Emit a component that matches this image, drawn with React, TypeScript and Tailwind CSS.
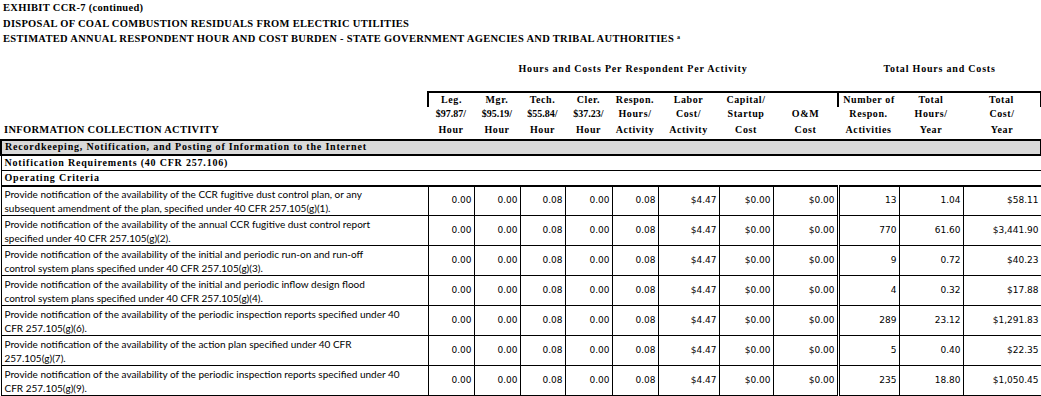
import React from "react";

const rows = [
  {
    d1: "Provide notification of the availability of the CCR fugitive dust control plan, or any",
    d2: "subsequent amendment of the plan, specified under 40 CFR 257.105(g)(1).",
    n: "13",
    h: "1.04",
    c: "$58.11",
  },
  {
    d1: "Provide notification of the availability of the annual CCR fugitive dust control report",
    d2: "specified under 40 CFR 257.105(g)(2).",
    n: "770",
    h: "61.60",
    c: "$3,441.90",
  },
  {
    d1: "Provide notification of the availability of the initial and periodic run-on and run-off",
    d2: "control system plans specified under 40 CFR 257.105(g)(3).",
    n: "9",
    h: "0.72",
    c: "$40.23",
  },
  {
    d1: "Provide notification of the availability of the initial and periodic inflow design flood",
    d2: "control system plans specified under 40 CFR 257.105(g)(4).",
    n: "4",
    h: "0.32",
    c: "$17.88",
  },
  {
    d1: "Provide notification of the availability of the periodic inspection reports specified under 40",
    d2: "CFR 257.105(g)(6).",
    n: "289",
    h: "23.12",
    c: "$1,291.83",
  },
  {
    d1: "Provide notification of the availability of the action plan specified under 40 CFR",
    d2: "257.105(g)(7).",
    n: "5",
    h: "0.40",
    c: "$22.35",
  },
  {
    d1: "Provide notification of the availability of the periodic inspection reports specified under 40",
    d2: "CFR 257.105(g)(9).",
    n: "235",
    h: "18.80",
    c: "$1,050.45",
  },
];

const fixed = ["0.00", "0.00", "0.08", "0.00", "0.08", "$4.47", "$0.00", "$0.00"];

const widths = [427, 46, 46, 45, 47, 46, 61, 54, 65, 61, 64, 78];

const head: string[][] = [
  ["Leg.", "$97.87/", "Hour"],
  ["Mgr.", "$95.19/", "Hour"],
  ["Tech.", "$55.84/", "Hour"],
  ["Cler.", "$37.23/", "Hour"],
  ["Respon.", "Hours/", "Activity"],
  ["Labor", "Cost/", "Activity"],
  ["Capital/", "Startup", "Cost"],
  ["", "O&M", "Cost"],
  ["Number of", "Respon.", "Activities"],
  ["Total", "Hours/", "Year"],
  ["Total", "Cost/", "Year"],
];

const serif = "font-['Liberation_Serif',serif] font-bold";
const numFont = "font-['DejaVu_Sans',sans-serif] text-[9px]";
const descFont = "font-['Lato',sans-serif] text-[10px]";
const headCell = `${serif} text-[10px] tracking-[0.6px] text-center leading-[14px] p-0 whitespace-nowrap`;
const headCellTight = `${serif} text-[10px] tracking-[0px] text-center leading-[14px] p-0 whitespace-nowrap`;

export default function App() {
  return (
    <div className="w-[1041px] h-[396px] overflow-hidden bg-white text-black">
      <div className={`${serif} text-[10.5px] tracking-[0.3px] leading-[15.5px] pl-[3px]`}>
        <div>EXHIBIT CCR-7 (continued)</div>
        <div>DISPOSAL OF COAL COMBUSTION RESIDUALS FROM ELECTRIC UTILITIES</div>
        <div>
          ESTIMATED ANNUAL RESPONDENT HOUR AND COST BURDEN - STATE GOVERNMENT AGENCIES AND TRIBAL AUTHORITIES{" "}
          <sup className="text-[6px]">a</sup>
        </div>
      </div>
      <table className="table-fixed border-collapse w-[1040px]">
        <colgroup>
          {widths.map((w, i) => (
            <col key={i} style={{ width: w }} />
          ))}
        </colgroup>
        <tbody>
          <tr className="h-[45px]">
            <td />
            <td colSpan={8} className={`${serif} text-[10px] tracking-[0.8px] text-center align-middle`}>
              Hours and Costs Per Respondent Per Activity
            </td>
            <td colSpan={3} className={`${serif} text-[10px] tracking-[0.8px] text-center align-middle`}>
              Total Hours and Costs
            </td>
          </tr>
          <tr className="h-[15px]">
            <td />
            {head.map((h, i) => (
              <td
                key={i}
                className={`${headCell} border-t-[2px] border-black ${
                  i === 0 || i === 8 ? "border-l-[2px]" : ""
                } ${i === 10 ? "border-r-[2px]" : ""}`}
              >
                {h[0]}
              </td>
            ))}
          </tr>
          <tr className="h-[14px]">
            <td />
            {head.map((h, i) => (
              <td key={i} className={i < 4 ? headCellTight : headCell}>
                {h[1]}
              </td>
            ))}
          </tr>
          <tr className="h-[19px]">
            <td className={`${serif} text-[10.5px] tracking-[0.3px] pl-[3px] align-middle leading-[14px]`}>
              INFORMATION COLLECTION ACTIVITY
            </td>
            {head.map((h, i) => (
              <td key={i} className={`${headCell} align-middle`}>
                {h[2]}
              </td>
            ))}
          </tr>
          <tr className="h-[15px] bg-[#d9d9d9]">
            <td
              colSpan={12}
              className={`${serif} text-[10px] tracking-[0.8px] pl-[3px] border-[2px] border-black leading-[12px]`}
            >
              Recordkeeping, Notification, and Posting of Information to the Internet
            </td>
          </tr>
          <tr className="h-[16px]">
            <td
              colSpan={12}
              className={`${serif} text-[10px] tracking-[0.8px] pl-[3px] border border-black leading-[13px]`}
            >
              Notification Requirements (40 CFR 257.106)
            </td>
          </tr>
          <tr className="h-[15px]">
            <td
              colSpan={12}
              className={`${serif} text-[10px] tracking-[0.8px] pl-[3px] border border-black border-b-[2px] leading-[12px]`}
            >
              Operating Criteria
            </td>
          </tr>
          {rows.map((r, ri) => (
            <tr key={ri} className="h-[30px]">
              <td className={`${descFont} leading-[14px] pl-[3px] border border-black align-middle whitespace-nowrap overflow-hidden`}>
                <div>{r.d1}</div>
                <div>{r.d2}</div>
              </td>
              {fixed.map((v, i) => (
                <td
                  key={i}
                  className={`${numFont} text-right pr-[2px] border border-black align-middle ${
                    i === 7 ? "border-r-[3px] border-double" : ""
                  }`}
                >
                  {v}
                </td>
              ))}
              <td className={`${numFont} text-right pr-[2px] border border-black align-middle`}>{r.n}</td>
              <td className={`${numFont} text-right pr-[2px] border border-black align-middle`}>{r.h}</td>
              <td className={`${numFont} text-right pr-[2px] border border-black align-middle`}>{r.c}</td>
            </tr>
          ))}
        </tbody>
      </table>
    </div>
  );
}
